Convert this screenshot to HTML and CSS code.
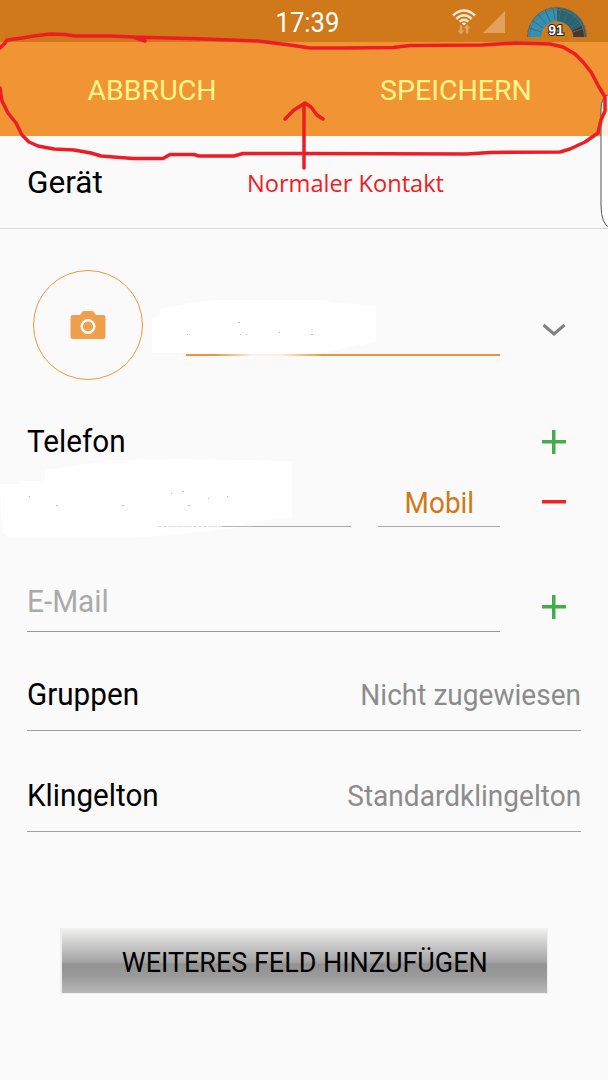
FILE: index.html
```html
<!DOCTYPE html>
<html lang="de">
<head>
<meta charset="UTF-8">
<meta name="viewport" content="width=device-width, initial-scale=1.0">
<title>Kontakt</title>
<link rel="stylesheet" href="styles.css">
</head>
<body>
    <div class="screen">
        <div class="statusbar">
            <div class="clock">17:39</div>
            <div class="status-icons">
                <svg class="wifi" width="24" height="26" viewBox="0 0 24 26">
                    <g fill="none" stroke="#fbe9d6" stroke-width="2.400">
                        <path d="M1 6.500Q12 -3.500 23 6.500"/>
                        <path d="M4.300 9.800Q12 2.800 19.700 9.800"/>
                        <path d="M7.600 12.700Q12 8.700 16.400 12.700"/>
                    </g>
                    <path d="M9.800 14.300Q12 12.500 14.200 14.300L12 16.500Z" fill="#fbe9d6"/>
                    <path d="M7.800 16.500h2.400v5h2.300L9 25.500L5.500 21.500h2.300ZM13.800 24.500h2.400v-5h2.300L15 15.500L11.500 19.500h2.300Z" fill="#e3a566"/>
                </svg>
                <svg class="signal" width="22" height="22" viewBox="0 0 22 22">
                    <path d="M22 0V22H0Z" fill="#e3a15d"/>
                </svg>
                <svg class="gauge" width="62" height="32" viewBox="0 0 62 32">
                    <path d="M1 31A30 30 0 0 1 61 31H47A16 16 0 0 0 15 31Z" fill="#586b70"/>
                    <path d="M8.500 31A22.500 22.500 0 0 1 31 8.500" fill="none" stroke="#2c93bd" stroke-width="13"/>
                    <path d="M31 8.500A22.500 22.500 0 0 1 51.500 22" fill="none" stroke="#20667f" stroke-width="13"/>
                    <path d="M51.500 22A22.500 22.500 0 0 1 53.500 31" fill="none" stroke="#41383a" stroke-width="12"/>
                    <path d="M3.500 31A27.500 27.500 0 0 1 58.500 31" fill="none" stroke="#6d6f63" stroke-width="1"/>
                    <path d="M15 26L3 22M17 22L7 15M20 18L12 8.500M24 15L19 4M29 14L27 2M33 14L35 2M38 15L43 4M42 18L50 8.500M45 22L55 15M47 26L59 22" stroke="#705f42" stroke-width="1"/>
                    <text class="gauge-value" x="30" y="29" text-anchor="middle">91</text>
                </svg>
            </div>
        </div>

        <div class="actionbar">
            <div class="action"><span>ABBRUCH</span></div>
            <div class="action"><span>SPEICHERN</span></div>
        </div>

        <div class="storage"><span>Gerät</span></div>

        <div class="profile">
            <div class="photo">
                <svg width="36" height="30" viewBox="0 0 36 30">
                    <path d="M3 5H10L12.500 1.500Q13 1 14 1H22Q23 1 23.500 1.500L26 5H33Q35.500 5 35.500 7.500V26.500Q35.500 29 33 29H3Q.5 29 .5 26.500V7.500Q.5 5 3 5Z" fill="#f0a04c"/>
                    <circle cx="18" cy="16.500" r="6.300" fill="none" stroke="#fff" stroke-width="2.400"/>
                </svg>
            </div>
            <div class="name-field"></div>
            <svg class="chevron" width="24" height="14" viewBox="0 0 24 14">
                <path d="M1.500 2L12 11L22.500 2" fill="none" stroke="#808080" stroke-width="3"/>
            </svg>
        </div>

        <div class="section-head">
            <span class="label">Telefon</span>
            <div class="icon plus"></div>
        </div>
        <div class="phone-row">
            <div class="number"></div>
            <div class="type"><span>Mobil</span></div>
            <div class="icon minus"></div>
        </div>
        <div class="email-row">
            <div class="email"><span>E-Mail</span></div>
            <div class="icon plus"></div>
        </div>

        <div class="row groups">
            <span class="label">Gruppen</span>
            <span class="value">Nicht zugewiesen</span>
        </div>
        <div class="row ringtone">
            <span class="label">Klingelton</span>
            <span class="value">Standardklingelton</span>
        </div>

        <div class="more"><span>WEITERES FELD HINZUFÜGEN</span></div>

        <!-- erased name and number, edge panel handle, red pen -->
        <svg class="overlay" width="608" height="1080" viewBox="0 0 608 1080">
            <defs>
                <linearGradient id="rubbed" x1="0" x2="1">
                    <stop offset="0" stop-color="#fff" stop-opacity="0"/>
                    <stop offset=".35" stop-color="#fff" stop-opacity=".85"/>
                    <stop offset=".6" stop-color="#fff" stop-opacity=".85"/>
                    <stop offset="1" stop-color="#fff" stop-opacity="0"/>
                </linearGradient>
            </defs>
            <path class="erased" d="M152 317L160 316V309L190 303L215 300H325L330 302L376 306V342L345 348L320 353H152Z"/>
            <path class="erased" d="M0 484H21V481H45V470L112 460L180 459L292 461V517L250 522L235 528L170 535L130 538H10L2 532Z"/>
            <rect x="214" y="353" width="110" height="3" fill="url(#rubbed)"/>
            <path d="M158 526.500H222" stroke="#ddd" stroke-dasharray="4 1"/>
            <rect x="222" y="526" width="30" height="1" fill="#b5b5b5"/>
            <path class="specks" d="M238 322.500h2M240 334.500h1M246 334.500h1M279 332.500h1M311 334.500h2M187 334.500h1M29 496.500h1M56 505.500h2M122 505.500h2M188 505.500h2M182 491.500h2M208 498.500h1M227 496.500h1M171 493.500h1"/>
            <path d="M610 94Q601 96 601 110V205Q601 224 610 228Z" fill="#fff" opacity=".85"/>
            <path d="M610 94Q601 96 601 110V205Q601 224 610 228" fill="none" stroke="#555" stroke-width="1"/>
            <g class="pen">
                <path d="M145 41L133 37L110 36H75L65 34.500L50 34L34 36L22 38L7 40L5 43L0 48M0 88L2 101L8 113L16 123L22 135L29 142L38 146L54 149L74 150L91 153L101 156L133 158.500H163L170 154.500H194L199 156H234L243 153.500H304L467 154L490 152.500L560 152L570 149L585 142L598 133L601 120L605 111V97L599 87L591 72L583 62L575 54L563 47L550 44L515 43L482 45L410 45.500L393 47.500L345 48H310L290 45L258 41L205 39L133 37"/>
                <path d="M304 168V105M285 119L294 110L305 103L311 107L317 115L323 119"/>
            </g>
            <text class="note" x="247" y="191.500" textLength="197" lengthAdjust="spacingAndGlyphs">Normaler Kontakt</text>
        </svg>
    </div>
</body>
</html>
```
FILE: styles.css
```css
body {
    margin: 0;
    background: #fafafa;
    font-family: Roboto, sans-serif;
    color: #000;
}
.screen {
    position: relative;
    width: 608px;
    height: 1080px;
    overflow: hidden;
    display: flex;
    flex-direction: column;
}
span {
    display: inline-block;
    white-space: nowrap;
}
.statusbar {
    height: 42px;
    flex: none;
    background: #cf791b;
    display: grid;
    grid-template-columns: 1fr auto 1fr;
}
.clock {
    grid-column: 2;
    padding-left: 8px;
    font-size: 27px;
    line-height: 46px;
    color: #fff;
    transform: scaleX(.95);
}
.status-icons {
    display: flex;
    justify-content: flex-end;
    align-items: flex-start;
    padding-right: 20px;
}
.wifi {
    margin-top: 9px;
}
.signal {
    margin: 11px 21px 0 7px;
}
.gauge {
    margin-top: 6px;
}
.gauge-value {
    font: bold 14px "Liberation Sans", sans-serif;
    fill: #fff;
    stroke: #222;
    stroke-width: 2px;
    paint-order: stroke;
}
.actionbar {
    height: 94px;
    flex: none;
    background: #f19433;
    display: flex;
}
.action {
    flex: 1;
    text-align: center;
    font-size: 28.500px;
    line-height: 97px;
    color: #fff68a;
}
.storage {
    height: 92px;
    flex: none;
    border-bottom: 1px solid #d8d8d8;
    padding-left: 27px;
    font-size: 32px;
    line-height: 93px;
}
.storage span {
    transform: scaleX(.985);
    transform-origin: left;
}
.profile {
    display: flex;
    height: 111px;
    margin-top: 41px;
    padding-left: 33px;
}
.photo {
    box-sizing: border-box;
    width: 110px;
    height: 110px;
    border: 1.500px solid #f0973a;
    border-radius: 50%;
    display: flex;
    justify-content: center;
    align-items: center;
}
.name-field {
    width: 314px;
    height: 84px;
    margin-left: 43px;
    border-bottom: 2px solid #f19433;
}
.chevron {
    margin: 53px 0 0 42px;
}
.section-head {
    display: flex;
    justify-content: space-between;
    align-items: center;
    height: 62px;
    margin-top: 30px;
    padding: 0 42px 0 27px;
}
.label {
    font-size: 31px;
    line-height: 36px;
    transform: scaleX(.957);
    transform-origin: left;
}
.section-head .label {
    padding-bottom: 1px;
}
.icon {
    width: 24px;
    height: 24px;
}
.plus {
    background: linear-gradient(#43ac4b, #43ac4b) center / 24px 3.500px no-repeat,
                linear-gradient(#43ac4b, #43ac4b) center / 3.500px 24px no-repeat;
}
.minus {
    background: linear-gradient(#ea2522, #ea2522) center / 24px 3.500px no-repeat;
}
.phone-row {
    display: flex;
    height: 54px;
    padding: 0 42px 0 27px;
}
.number {
    width: 324px;
    border-bottom: 1px solid #a8a8a8;
}
.type {
    width: 122px;
    margin-left: 27px;
    border-bottom: 1px solid #a8a8a8;
    text-align: center;
    font-size: 30px;
    line-height: 60px;
    color: #d27816;
}
.type span {
    transform: scaleX(.93);
}
.phone-row .icon {
    margin: 17px 0 0 42px;
}
.email-row {
    display: flex;
    height: 60px;
    margin-top: 45px;
    padding: 0 42px 0 27px;
}
.email {
    width: 473px;
    border-bottom: 1px solid #969696;
    font-size: 31px;
    line-height: 60px;
    color: #aaa;
}
.email span {
    transform: scaleX(.96);
    transform-origin: left;
}
.email-row .icon {
    margin: 23px 0 0 42px;
}
.row {
    display: flex;
    justify-content: space-between;
    align-items: center;
    height: 72px;
    margin: 26px 27px 0;
    border-bottom: 1px solid #a0a0a0;
}
.row span {
    padding-top: 1px;
}
.ringtone {
    margin-top: 28px;
}
.value {
    font-size: 30px;
    line-height: 36px;
    color: #8c8c8c;
    transform: scaleX(.935);
    transform-origin: right;
}
.more {
    box-sizing: border-box;
    width: 488px;
    height: 66px;
    margin: 96px 0 0 60px;
    border: solid #eee;
    border-width: 0 1px 1px 2px;
    background: linear-gradient(#f3f2f1, #d0d0d0 22%, #a5a5a5 52%, #929292 56%, #9b9b9b 75%, #b9b9b9);
    text-align: center;
    font-size: 27.500px;
    line-height: 70px;
}
.more span {
    transform: scaleX(.98);
}
.overlay {
    position: absolute;
    left: 0;
    top: 0;
}
.erased {
    fill: #fff;
}
.specks {
    stroke: #bbb;
}
.pen {
    fill: none;
    stroke: #ee1c25;
    stroke-width: 3.500px;
    stroke-linecap: round;
    stroke-linejoin: round;
}
.note {
    font: 24.500px "Open Sans", sans-serif;
    fill: #ee1c25;
}
```
